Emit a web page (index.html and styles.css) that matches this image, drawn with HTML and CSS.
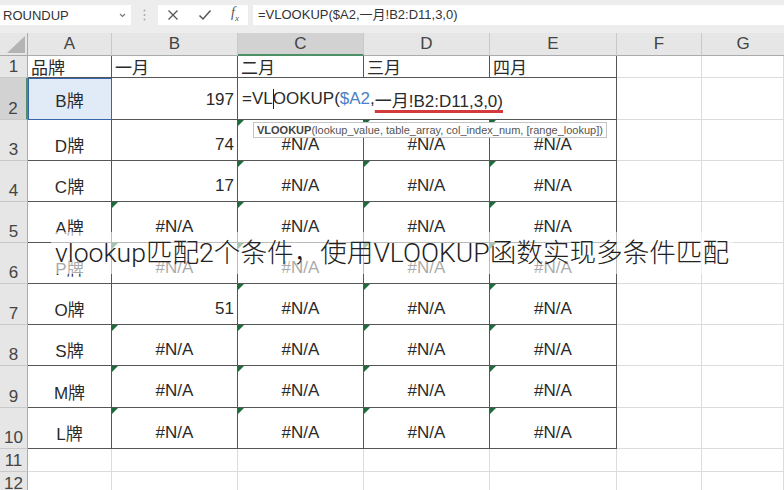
FILE: index.html
```html
<!DOCTYPE html>
<html lang="zh-CN">
<head>
<meta charset="utf-8">
<title>VLOOKUP</title>
<link rel="stylesheet" href="styles.css">
</head>
<body>
<div class="toolbar">
  <div class="namebox"><span>ROUNDUP</span>
    <svg class="chev" width="7" height="5" viewBox="0 0 7 5"><path d="M1 1 L3.5 3.5 L6 1" fill="none" stroke="#777" stroke-width="1.2"/></svg>
  </div>
  <div class="dots"><svg width="3" height="12" viewBox="0 0 3 12"><circle cx="1.5" cy="1.5" r="1" fill="#aaa"/><circle cx="1.5" cy="6" r="1" fill="#aaa"/><circle cx="1.5" cy="10.5" r="1" fill="#aaa"/></svg></div>
  <div class="btns">
    <svg width="12" height="12" viewBox="0 0 12 12"><path d="M1.5 1.5 L10.5 10.5 M10.5 1.5 L1.5 10.5" stroke="#555" stroke-width="1.3" fill="none"/></svg>
    <svg width="14" height="12" viewBox="0 0 14 12"><path d="M1.5 6.5 L5 10 L12.5 1.5" stroke="#555" stroke-width="1.5" fill="none"/></svg>
    <span class="fx">f<sub>x</sub></span>
  </div>
  <div class="fbox">=VLOOKUP($A2,一月!B2:D11,3,0)</div>
</div>

<div class="sheet">
  <div class="h corner"><svg width="18" height="17" viewBox="0 0 18 17"><path d="M18 0 L18 17 L0 17 Z" fill="#b4b4b4"/></svg></div>
  <div class="h">A</div><div class="h">B</div><div class="h hs">C</div><div class="h">D</div><div class="h">E</div><div class="h">F</div><div class="h last">G</div>

  <div class="r">1</div>
  <div class="c t l">品牌</div><div class="c t l">一月</div><div class="c t l">二月</div><div class="c t l">三月</div><div class="c t l">四月</div><div class="c"></div><div class="c"></div>

  <div class="r rs">2</div>
  <div class="c t m sel">B牌</div><div class="c t n top">197</div>
  <div class="c t f2">=V<span class="vl">L</span><span class="caret"></span>OOKUP(<span class="ref">$A2</span>,<span class="ul">一月!B2:D11,3,0)</span></div>
  <div class="c"></div><div class="c"></div>

  <div class="r">3</div>
  <div class="c t m">D牌</div><div class="c t n">74</div><div class="c t m err">#N/A</div><div class="c t m err">#N/A</div><div class="c t m err">#N/A</div><div class="c"></div><div class="c"></div>

  <div class="r">4</div>
  <div class="c t m">C牌</div><div class="c t n">17</div><div class="c t m err">#N/A</div><div class="c t m err">#N/A</div><div class="c t m err">#N/A</div><div class="c"></div><div class="c"></div>

  <div class="r">5</div>
  <div class="c t m">A牌</div><div class="c t m err">#N/A</div><div class="c t m err">#N/A</div><div class="c t m err">#N/A</div><div class="c t m err">#N/A</div><div class="c"></div><div class="c"></div>

  <div class="r">6</div>
  <div class="c t m">P牌</div><div class="c t m err">#N/A</div><div class="c t m err">#N/A</div><div class="c t m err">#N/A</div><div class="c t m err">#N/A</div><div class="c"></div><div class="c"></div>

  <div class="r">7</div>
  <div class="c t m">O牌</div><div class="c t n">51</div><div class="c t m err">#N/A</div><div class="c t m err">#N/A</div><div class="c t m err">#N/A</div><div class="c"></div><div class="c"></div>

  <div class="r">8</div>
  <div class="c t m">S牌</div><div class="c t m err">#N/A</div><div class="c t m err">#N/A</div><div class="c t m err">#N/A</div><div class="c t m err">#N/A</div><div class="c"></div><div class="c"></div>

  <div class="r">9</div>
  <div class="c t m">M牌</div><div class="c t m err">#N/A</div><div class="c t m err">#N/A</div><div class="c t m err">#N/A</div><div class="c t m err">#N/A</div><div class="c"></div><div class="c"></div>

  <div class="r">10</div>
  <div class="c t m">L牌</div><div class="c t m err">#N/A</div><div class="c t m err">#N/A</div><div class="c t m err">#N/A</div><div class="c t m err">#N/A</div><div class="c"></div><div class="c"></div>

  <div class="r">11</div>
  <div class="c"></div><div class="c"></div><div class="c"></div><div class="c"></div><div class="c"></div><div class="c"></div><div class="c"></div>

  <div class="r">12</div>
  <div class="c"></div><div class="c"></div><div class="c"></div><div class="c"></div><div class="c"></div><div class="c"></div><div class="c"></div>
</div>

<div class="tip"><b>VLOOKUP</b>(lookup_value, table_array, col_index_num, [range_lookup])</div>

<div class="title"><span>vlookup匹配2个条件，使用VLOOKUP函数实现多条件匹配</span></div>
</body>
</html>
```

FILE: styles.css
```css
body {
  margin: 0;
  width: 784px;
  height: 490px;
  overflow: hidden;
  background: #fff;
  position: relative;
  font-family: "Liberation Sans", "Noto Sans CJK SC", sans-serif;
}

.toolbar {
  height: 33px;
  box-sizing: border-box;
  padding-top: 5px;
  background: #ededed;
  display: flex;
  align-items: flex-start;
}

.namebox {
  width: 131px;
  height: 20px;
  box-sizing: border-box;
  background: #fff;
  padding: 0 5px 0 3px;
  display: flex;
  align-items: center;
  justify-content: space-between;
  font-size: 13px;
  color: #333;
}

.dots {
  width: 27px;
  height: 20px;
  display: flex;
  align-items: center;
  justify-content: center;
}

.btns {
  width: 90px;
  height: 20px;
  background: #fff;
  display: flex;
  align-items: center;
  justify-content: space-between;
  box-sizing: border-box;
  padding: 0 9px 0 9px;
}

.fx {
  font-family: "Liberation Serif", serif;
  font-style: italic;
  font-size: 14px;
  color: #555;
  line-height: 14px;
}

.fx sub {
  font-size: 9px;
}

.fbox {
  flex: 1;
  height: 20px;
  margin-left: 5px;
  background: #fff;
  padding-left: 5px;
  font-size: 13px;
  line-height: 20px;
  color: #333;
  white-space: nowrap;
}

.sheet {
  display: grid;
  grid-template-columns: 28px 84px 126px 126px 126px 127px 85px 82px;
  grid-template-rows: 23px 22px 42px 41px 41px 41px 41px 41px 41px 42px 41px 23px 23px;
}

.h {
  background: #e6e6e6;
  border-right: 1px solid #c9c9c9;
  border-bottom: 1px solid #ababab;
  box-sizing: border-box;
  display: flex;
  align-items: center;
  justify-content: center;
  font-size: 17px;
  color: #444;
}

.h.last {
  border-right: none;
}

.corner {
  justify-content: flex-end;
  align-items: flex-end;
  padding: 0 2px 2px 0;
  border-right: 1px solid #ababab;
}

.hs {
  background: #d2d2d2;
  border-bottom: 2px solid #4d9068;
}

.r {
  background: #e6e6e6;
  border-right: 1px solid #ababab;
  border-bottom: 1px solid #c9c9c9;
  box-sizing: border-box;
  display: flex;
  align-items: flex-end;
  justify-content: center;
  font-size: 17px;
  line-height: 20px;
  color: #444;
}

.rs {
  background: #d2d2d2;
  border-right: 2px solid #4d9068;
}

.c {
  border-right: 1px solid #dcdcdc;
  border-bottom: 1px solid #dcdcdc;
  box-sizing: border-box;
  display: flex;
  align-items: center;
  font-size: 17px;
  color: #2a2a2a;
  position: relative;
  white-space: nowrap;
}

.t {
  border-color: #555;
}

.l {
  padding-left: 3px;
}

.m {
  justify-content: center;
  padding-top: 9px;
}

.n {
  justify-content: flex-end;
  padding-right: 3px;
  padding-top: 9px;
}

.n.top {
  padding-top: 2px;
}

.sel {
  background: #e1ebf7;
  outline: 1px solid #3863ad;
  outline-offset: -1px;
  padding-top: 2px;
}

.err::before {
  content: "";
  position: absolute;
  left: 0;
  top: 0;
  border-top: 6px solid #1e6b3c;
  border-right: 6px solid transparent;
}

.f2 {
  grid-column: span 3;
  padding-left: 4px;
  padding-top: 1px;
}

.caret {
  display: inline-block;
  width: 1px;
  height: 20px;
  background: #222;
  margin-right: -1px;
}

.ref {
  color: #4a80c6;
}

.ul {
  text-decoration: underline #d63b3b;
  text-decoration-thickness: 3px;
  text-underline-offset: 3px;
  text-decoration-skip-ink: none;
}

.tip {
  position: absolute;
  top: 122px;
  left: 253px;
  height: 16px;
  box-sizing: border-box;
  padding: 0 3px;
  background: #fff;
  border: 1px solid #c4c4c4;
  font-size: 11px;
  line-height: 14px;
  color: #555;
  white-space: nowrap;
}

.tip b {
  color: #444;
}

.title {
  position: absolute;
  top: 232px;
  left: 0;
  right: 0;
  display: flex;
  justify-content: center;
}

.title span {
  background: rgba(255, 255, 255, 0.6);
  font-family: "Roboto", "Noto Sans CJK SC", sans-serif;
  font-weight: 300;
  font-size: 26.6px;
  line-height: 42px;
  color: #222;
  padding: 0 4px;
  white-space: nowrap;
}
```
